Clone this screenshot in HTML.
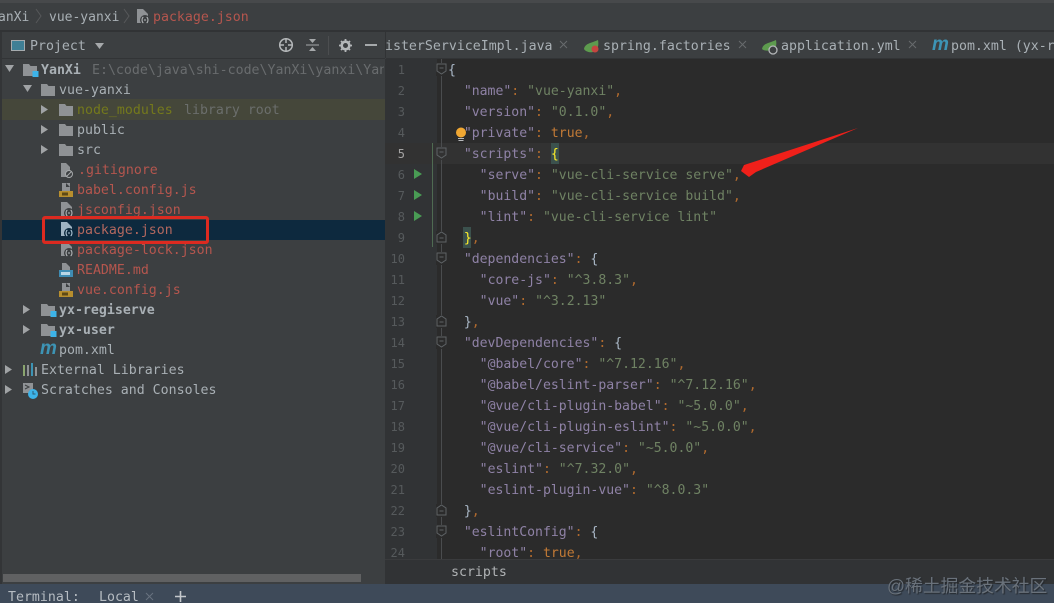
<!DOCTYPE html>
<html><head><meta charset="utf-8">
<style>
html,body{margin:0;padding:0;background:#3c3f41}
#r{position:relative;width:1054px;height:603px;overflow:hidden;background:#3c3f41;font-family:"DejaVu Sans Mono","Liberation Mono",monospace;font-size:13px;color:#a9b0b5;filter:blur(.35px)}
#r div{position:absolute}
.a{white-space:pre;line-height:20px;height:20px;margin-top:2px}
.t{white-space:pre;line-height:20px;height:20px;font-size:13.25px;margin-top:2px}
.red{color:#b5564e}
.e{white-space:pre;line-height:21px;height:21px;left:448px;color:#a9b7c6;font-size:13.15px;margin-top:1px}
.n{left:385px;width:20px;text-align:right;line-height:21px;height:21px;font-size:12px;color:#565a5c;margin-top:1px}
.k{color:#8f82a6}.s{color:#6f8263}.p{color:#b06a2e}.q{color:#a9b7c6}.v{color:#c27a36}
.m{font-family:"Liberation Sans",sans-serif;font-weight:bold;font-style:italic;font-size:19px;color:#3d94b5;line-height:20px;height:20px}
svg{position:absolute;overflow:visible}
</style></head><body>
<div id="r">
<svg width="0" height="0" style="position:absolute"><defs>
<g id="fo"><path d="M0 1h6l1.500 2H14v10H0z" fill="#8f9295"/></g>
<g id="mo"><path d="M0 1h6l1.500 2H14v10H0z" fill="#8f9295"/><rect x="9.500" y="8" width="6" height="6" fill="#3db3e8"/></g>
<g id="ar"><path d="M0 0l7 4.500L0 9z" fill="#a0a3a5"/></g>
<g id="dn"><path d="M0 0h9L4.500 7z" fill="#a0a3a5"/></g>
<g id="js"><path d="M3 1h4v4h4V1l-3 0M7 1l4 4v4H3V1z" fill="#8f9295"/><rect x="0" y="9" width="14" height="6" fill="#b88f2e"/><rect x="3" y="10.500" width="6" height="3" fill="#5e4a16"/></g>
<g id="md"><path d="M3 1h4l4 4v4H3z" fill="#8f9295"/><rect x="0" y="8" width="14" height="7" fill="#3f8cb3"/><rect x="2" y="10" width="9" height="3" fill="#b9d5e4"/></g>
<g id="jn"><path d="M1 0h6l5 5v9H1z" fill="#8f9295"/><circle cx="9" cy="11" r="5" fill="#3c3f41"/><path d="M7.300 8C5.600 9.300 5.600 12.700 7.300 14M10.700 8C12.400 9.300 12.400 12.700 10.700 14M9 10v2" stroke="#b9bcbe" stroke-width="1" fill="none"/></g>
<g id="jns"><path d="M1 0h6l5 5v9H1z" fill="#9fb3c2"/><circle cx="9" cy="11" r="5" fill="#0d293e"/><path d="M7.300 8C5.600 9.300 5.600 12.700 7.300 14M10.700 8C12.400 9.300 12.400 12.700 10.700 14M9 10v2" stroke="#b9d0e0" stroke-width="1" fill="none"/></g>
<g id="fd"><path d="M0 0h9v7L4.500 10 0 7z" fill="none" stroke="#5f6366"/><path d="M2.500 4h4" stroke="#5f6366"/></g>
<g id="fu"><path d="M0 10h9V3L4.500 0 0 3z" fill="none" stroke="#5f6366"/><path d="M2.500 6h4" stroke="#5f6366"/></g>
<g id="run"><path d="M0 0l8 5-8 5z" fill="#499c54"/></g>
<g id="x"><path d="M0 0l7 7M7 0L0 7" stroke="#686b6d" stroke-width="1" fill="none"/></g>
</defs></svg>

<!-- top -->
<div style="left:0;top:0;width:1054px;height:3px;background:#47494b"></div>
<div style="left:0;top:30px;width:1054px;height:2px;background:#313335"></div>
<div class="a" style="left:-2px;top:6px;font-size:13px">anXi</div>
<svg style="left:36px;top:8px" width="6" height="16"><path d="M0 1l5 7-5 7" stroke="#57595b" fill="none"/></svg>
<div class="a" style="left:49px;top:6px;font-size:13px">vue-yanxi</div>
<svg style="left:124px;top:8px" width="6" height="16"><path d="M0 1l5 7-5 7" stroke="#57595b" fill="none"/></svg>
<svg style="left:136px;top:9px" width="15" height="16"><use href="#jn"/></svg>
<div class="a red" style="left:153px;top:6px;font-size:13.25px">package.json</div>

<!-- sidebar -->
<div style="left:0;top:32px;width:2px;height:552px;background:#333537"></div>
<div style="left:2px;top:58px;width:383px;height:1px;background:#323436"></div>
<div style="left:11px;top:40px;width:14px;height:11px;background:#3f7f95;border:1px solid #a6abae;box-sizing:border-box"></div>
<div class="a" style="left:30px;top:35px;font-size:13.25px">Project</div>
<svg style="left:95px;top:43px" width="9" height="7"><path d="M0 0h9L4.500 6z" fill="#a6a9ab"/></svg>
<svg style="left:278px;top:37px" width="16" height="16"><circle cx="8" cy="8" r="6.300" fill="none" stroke="#b4b7b9" stroke-width="1.500"/><path d="M8 1v5M8 10v5M1 8h5M10 8h5" stroke="#b4b7b9" stroke-width="1.500"/></svg>
<svg style="left:306px;top:38px" width="13" height="14"><path d="M0 7h13" stroke="#a6a9ab"/><path d="M3 1h7L6.500 5zM3 13h7L6.500 9z" fill="#a6a9ab"/></svg>
<div style="left:328px;top:36px;width:1px;height:19px;background:#4c4e50"></div>
<svg style="left:339px;top:39px" width="13" height="13"><circle cx="6.500" cy="6.500" r="3.800" fill="none" stroke="#b4b7b9" stroke-width="2.600"/><path d="M6.500 0v2.500M6.500 10.500V13M0 6.500h2.500M10.500 6.500H13M2 2l1.500 1.500M9.500 9.500L11 11M2 11l1.500-1.500M9.500 3.500L11 2" stroke="#b4b7b9" stroke-width="1.800"/></svg>
<div style="left:365px;top:44px;width:12px;height:2px;background:#a6a9ab"></div>
<div style="left:385px;top:32px;width:1px;height:26px;background:#313335"></div>

<div style="left:2px;top:99px;width:383px;height:21px;background:#45473a"></div>
<div style="left:2px;top:220px;width:383px;height:20px;background:#0d293e"></div>

<svg style="left:5px;top:65px" width="9" height="7"><use href="#dn"/></svg>
<svg style="left:23px;top:63px" width="16" height="16"><use href="#mo"/></svg>
<div class="t" style="left:41px;top:59px;font-weight:bold;color:#a9b0b5">YanXi</div>
<div class="t" style="left:92px;top:59px;color:#696c6e;width:292px;overflow:hidden">E:\code\java\shi-code\YanXi\yanxi\YanXi</div>

<svg style="left:23px;top:85px" width="9" height="7"><use href="#dn"/></svg>
<svg style="left:41px;top:83px" width="14" height="14"><use href="#fo"/></svg>
<div class="t" style="left:59px;top:79px">vue-yanxi</div>

<svg style="left:41px;top:105px" width="7" height="9"><use href="#ar"/></svg>
<svg style="left:59px;top:103px" width="14" height="14"><use href="#fo"/></svg>
<div class="t" style="left:77px;top:99px;color:#74791c">node_modules</div>
<div class="t" style="left:184px;top:99px;color:#6b6e6c">library root</div>

<svg style="left:41px;top:125px" width="7" height="9"><use href="#ar"/></svg>
<svg style="left:59px;top:123px" width="14" height="14"><use href="#fo"/></svg>
<div class="t" style="left:77px;top:119px">public</div>

<svg style="left:41px;top:145px" width="7" height="9"><use href="#ar"/></svg>
<svg style="left:59px;top:143px" width="14" height="14"><use href="#fo"/></svg>
<div class="t" style="left:77px;top:139px">src</div>

<svg style="left:60px;top:162px" width="14" height="16"><path d="M1 1h5l4 4v10H1z" fill="#8f9295"/><circle cx="9" cy="12" r="3.500" fill="#3c3f41" stroke="#a6a9ab"/><path d="M6.500 14.500l5-5" stroke="#a6a9ab"/></svg>
<div class="t red" style="left:78px;top:159px">.gitignore</div>

<svg style="left:59px;top:182px" width="15" height="16"><use href="#js"/></svg>
<div class="t red" style="left:77px;top:179px">babel.config.js</div>

<svg style="left:60px;top:202px" width="15" height="16"><use href="#jn"/></svg>
<div class="t red" style="left:77px;top:199px">jsconfig.json</div>

<svg style="left:60px;top:222px" width="15" height="16"><use href="#jns"/></svg>
<div class="t" style="left:77px;top:219px;color:#b3685f">package.json</div>

<svg style="left:60px;top:242px" width="15" height="16"><use href="#jn"/></svg>
<div class="t red" style="left:77px;top:239px">package-lock.json</div>

<svg style="left:59px;top:262px" width="15" height="16"><use href="#md"/></svg>
<div class="t red" style="left:77px;top:259px">README.md</div>

<svg style="left:59px;top:282px" width="15" height="16"><use href="#js"/></svg>
<div class="t red" style="left:77px;top:279px">vue.config.js</div>

<svg style="left:23px;top:305px" width="7" height="9"><use href="#ar"/></svg>
<svg style="left:41px;top:303px" width="16" height="16"><use href="#mo"/></svg>
<div class="t" style="left:59px;top:299px;font-weight:bold">yx-regiserve</div>

<svg style="left:23px;top:325px" width="7" height="9"><use href="#ar"/></svg>
<svg style="left:41px;top:323px" width="16" height="16"><use href="#mo"/></svg>
<div class="t" style="left:59px;top:319px;font-weight:bold">yx-user</div>

<div class="m" style="left:40px;top:339px">m</div>
<div class="t" style="left:59px;top:339px">pom.xml</div>

<svg style="left:5px;top:365px" width="7" height="9"><use href="#ar"/></svg>
<svg style="left:23px;top:363px" width="15" height="13"><path d="M1 2v11" stroke="#8aa56f" stroke-width="2"/><path d="M5 2v11" stroke="#8f9295" stroke-width="2"/><path d="M9 0v13" stroke="#3d94b5" stroke-width="2"/><path d="M13 4v9" stroke="#8f9295" stroke-width="2"/></svg>
<div class="t" style="left:41px;top:359px">External Libraries</div>

<svg style="left:5px;top:385px" width="7" height="9"><use href="#ar"/></svg>
<svg style="left:23px;top:383px" width="16" height="16"><path d="M0 0h10v10H0z" fill="#8f9295"/><path d="M2 2l4 2-4 2" stroke="#3c3f41" fill="none"/><circle cx="10" cy="11" r="5" fill="#3db3e8"/><path d="M10 8v3h2.500" stroke="#2b5e76" fill="none"/></svg>
<div class="t" style="left:41px;top:379px">Scratches and Consoles</div>

<!-- sidebar scroll -->
<div style="left:3px;top:574px;width:358px;height:8px;background:#606162"></div>

<!-- red rect -->
<div style="left:42px;top:216px;width:167px;height:28px;box-sizing:border-box;border:3px solid #dc2a20;border-radius:3px"></div>

<!-- tabs -->
<div style="left:386px;top:58px;width:668px;height:1px;background:#323436"></div>
<div class="a" style="left:385px;top:35px;font-size:13.25px">isterServiceImpl.java</div>
<svg style="left:560px;top:41px" width="7" height="7"><use href="#x"/></svg>
<svg style="left:584px;top:40px" width="15" height="14"><path d="M0 9C1 3 8 3 14 0c1 5 0 11-5 12-4 1-8-1-9-3z" fill="#5d9b4e"/><circle cx="11" cy="9" r="3.500" fill="#c5453f"/></svg>
<div class="a" style="left:603px;top:35px;font-size:13.25px">spring.factories</div>
<svg style="left:739px;top:41px" width="7" height="7"><use href="#x"/></svg>
<svg style="left:762px;top:40px" width="16" height="15"><path d="M0 9C1 3 8 3 14 0c1 5 0 9-4 10-4 1-8 1-10-1z" fill="#5d9b4e"/><circle cx="11" cy="10" r="4" fill="#3c3f41" stroke="#b4b7b9" stroke-width="1.300"/></svg>
<div class="a" style="left:781px;top:35px;font-size:13.25px">application.yml</div>
<svg style="left:909px;top:41px" width="7" height="7"><use href="#x"/></svg>
<div class="m" style="left:932px;top:35px">m</div>
<div class="a" style="left:951px;top:35px;font-size:13.25px">pom.xml (yx-r</div>

<!-- editor -->
<div style="left:385px;top:59px;width:52px;height:501px;background:#313335"></div>
<div style="left:437px;top:59px;width:617px;height:501px;background:#2b2b2b"></div>
<div style="left:385px;top:143px;width:669px;height:21px;background:#323232"></div>
<div style="left:441px;top:59px;width:1px;height:501px;background:#4a4c4e"></div>
<div style="left:432px;top:143px;width:1px;height:104px;background:#4f6b52"></div>

<svg style="left:437px;top:64px" width="10" height="11"><rect x="-1" y="-1" width="11" height="13" fill="#2b2b2b"/><use href="#fd"/></svg>
<svg style="left:437px;top:148px" width="10" height="11"><rect x="-1" y="-1" width="11" height="13" fill="#323232"/><use href="#fd"/></svg>
<svg style="left:437px;top:232px" width="10" height="11"><rect x="-1" y="-1" width="11" height="13" fill="#2b2b2b"/><use href="#fu"/></svg>
<svg style="left:437px;top:253px" width="10" height="11"><rect x="-1" y="-1" width="11" height="13" fill="#2b2b2b"/><use href="#fd"/></svg>
<svg style="left:437px;top:316px" width="10" height="11"><rect x="-1" y="-1" width="11" height="13" fill="#2b2b2b"/><use href="#fu"/></svg>
<svg style="left:437px;top:337px" width="10" height="11"><rect x="-1" y="-1" width="11" height="13" fill="#2b2b2b"/><use href="#fd"/></svg>
<svg style="left:437px;top:505px" width="10" height="11"><rect x="-1" y="-1" width="11" height="13" fill="#2b2b2b"/><use href="#fu"/></svg>
<svg style="left:437px;top:526px" width="10" height="11"><rect x="-1" y="-1" width="11" height="13" fill="#2b2b2b"/><use href="#fd"/></svg>

<svg style="left:414px;top:169px" width="8" height="10"><use href="#run"/></svg>
<svg style="left:414px;top:190px" width="8" height="10"><use href="#run"/></svg>
<svg style="left:414px;top:211px" width="8" height="10"><use href="#run"/></svg>

<div class="n" style="top:59px">1</div><div class="n" style="top:80px">2</div><div class="n" style="top:101px">3</div><div class="n" style="top:122px">4</div>
<div class="n" style="top:143px;color:#a4a3a3">5</div><div class="n" style="top:164px">6</div><div class="n" style="top:185px">7</div><div class="n" style="top:206px">8</div>
<div class="n" style="top:227px">9</div><div class="n" style="top:248px">10</div><div class="n" style="top:269px">11</div><div class="n" style="top:290px">12</div>
<div class="n" style="top:311px">13</div><div class="n" style="top:332px">14</div><div class="n" style="top:353px">15</div><div class="n" style="top:374px">16</div>
<div class="n" style="top:395px">17</div><div class="n" style="top:416px">18</div><div class="n" style="top:437px">19</div><div class="n" style="top:458px">20</div>
<div class="n" style="top:479px">21</div><div class="n" style="top:500px">22</div><div class="n" style="top:521px">23</div><div class="n" style="top:542px">24</div>

<div style="left:551px;top:143px;width:8px;height:21px;background:#3b514d"></div>
<div style="left:463px;top:227px;width:8px;height:21px;background:#3b514d"></div>

<div class="e" style="top:59px">{</div>
<div class="e" style="top:80px">  <span class="k">"name"</span><span class="p">:</span> <span class="s">"vue-yanxi"</span><span class="p">,</span></div>
<div class="e" style="top:101px">  <span class="k">"version"</span><span class="p">:</span> <span class="s">"0.1.0"</span><span class="p">,</span></div>
<div class="e" style="top:122px">  <span class="k">"private"</span><span class="p">:</span> <span class="v">true</span><span class="p">,</span></div>
<div class="e" style="top:143px">  <span class="k">"scripts"</span><span class="p">:</span> <span style="color:#ffef28">{</span></div>
<div class="e" style="top:164px">    <span class="k">"serve"</span><span class="p">:</span> <span class="s">"vue-cli-service serve"</span><span class="p">,</span></div>
<div class="e" style="top:185px">    <span class="k">"build"</span><span class="p">:</span> <span class="s">"vue-cli-service build"</span><span class="p">,</span></div>
<div class="e" style="top:206px">    <span class="k">"lint"</span><span class="p">:</span> <span class="s">"vue-cli-service lint"</span></div>
<div class="e" style="top:227px">  <span style="color:#ffef28">}</span><span class="p">,</span></div>
<div class="e" style="top:248px">  <span class="k">"dependencies"</span><span class="p">:</span> {</div>
<div class="e" style="top:269px">    <span class="k">"core-js"</span><span class="p">:</span> <span class="s">"^3.8.3"</span><span class="p">,</span></div>
<div class="e" style="top:290px">    <span class="k">"vue"</span><span class="p">:</span> <span class="s">"^3.2.13"</span></div>
<div class="e" style="top:311px">  }<span class="p">,</span></div>
<div class="e" style="top:332px">  <span class="k">"devDependencies"</span><span class="p">:</span> {</div>
<div class="e" style="top:353px">    <span class="k">"@babel/core"</span><span class="p">:</span> <span class="s">"^7.12.16"</span><span class="p">,</span></div>
<div class="e" style="top:374px">    <span class="k">"@babel/eslint-parser"</span><span class="p">:</span> <span class="s">"^7.12.16"</span><span class="p">,</span></div>
<div class="e" style="top:395px">    <span class="k">"@vue/cli-plugin-babel"</span><span class="p">:</span> <span class="s">"~5.0.0"</span><span class="p">,</span></div>
<div class="e" style="top:416px">    <span class="k">"@vue/cli-plugin-eslint"</span><span class="p">:</span> <span class="s">"~5.0.0"</span><span class="p">,</span></div>
<div class="e" style="top:437px">    <span class="k">"@vue/cli-service"</span><span class="p">:</span> <span class="s">"~5.0.0"</span><span class="p">,</span></div>
<div class="e" style="top:458px">    <span class="k">"eslint"</span><span class="p">:</span> <span class="s">"^7.32.0"</span><span class="p">,</span></div>
<div class="e" style="top:479px">    <span class="k">"eslint-plugin-vue"</span><span class="p">:</span> <span class="s">"^8.0.3"</span></div>
<div class="e" style="top:500px">  }<span class="p">,</span></div>
<div class="e" style="top:521px">  <span class="k">"eslintConfig"</span><span class="p">:</span> {</div>
<div class="e" style="top:542px">    <span class="k">"root"</span><span class="p">:</span> <span class="v">true</span><span class="p">,</span></div>

<svg style="left:455px;top:127px" width="13" height="16"><circle cx="6" cy="5.500" r="5" fill="#f0a732"/><path d="M3 11.500h6M3.500 13.500h5" stroke="#b8babc"/></svg>

<!-- arrow -->
<svg style="left:0;top:0" width="1054" height="603"><path d="M858 128L744 165 741 171 749 177 756 172z" fill="#f0201a"/></svg>

<!-- breadcrumbs in editor -->
<div style="left:385px;top:559px;width:669px;height:25px;background:#313335;border-top:1px solid #3a3b3d;box-sizing:border-box"></div>
<div class="a" style="left:451px;top:561px;font-size:13.25px;color:#b0b3b5">scripts</div>

<!-- bottom -->
<div style="left:0;top:584px;width:1054px;height:19px;background:#3e4a59"></div>
<div class="a" style="left:8px;top:587px;font-size:13.25px;color:#b6bcc2;margin-top:1px">Terminal:</div>
<div class="a" style="left:99px;top:587px;font-size:13.25px;color:#b6bcc2;margin-top:1px">Local</div>
<svg style="left:146px;top:593px" width="7" height="7"><path d="M0 0l7 7M7 0L0 7" stroke="#68727f" fill="none"/></svg>
<svg style="left:175px;top:591px" width="11" height="11"><path d="M5.500 0v11M0 5.500h11" stroke="#c4c8cc" stroke-width="1.600"/></svg>

<!-- watermark -->
<div style="left:887px;top:574px;white-space:pre;line-height:25px;font-size:17.800px;font-family:'Liberation Sans','Noto Sans CJK SC',sans-serif;color:#6a727b;text-shadow:1px 1px 1px #24282d">@稀土掘金技术社区</div>
</div>
</body></html>
